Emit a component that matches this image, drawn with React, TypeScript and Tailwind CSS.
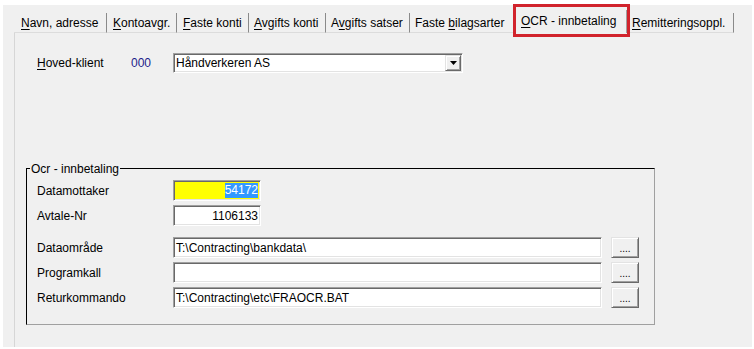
import React from 'react';

const font = "font-['Liberation_Sans',Arial,sans-serif]";

// sunken 3d edge (text boxes) and raised edge (buttons)
const sunken =
  'border border-[#a0a0a0] border-r-white border-b-white shadow-[inset_1px_1px_0_#696969,inset_-1px_-1px_0_#e3e3e3]';
const raised =
  'border border-[#e3e3e3] border-r-[#696969] border-b-[#696969] shadow-[inset_1px_1px_0_#ffffff,inset_-1px_-1px_0_#a0a0a0] bg-[#f0f0f0]';

const Mnemonic = ({ text, u }: { text: string; u: number }) => (
  <span>
    {text.slice(0, u)}
    <span className="underline underline-offset-2">{text.charAt(u)}</span>
    {text.slice(u + 1)}
  </span>
);

const tabs = [
  { text: 'Navn, adresse', u: 0, cls: 'w-[93px] pl-[7px] border-r' },
  { text: 'Kontoavgr.', u: 0, cls: 'w-[70px] pl-[6px] border-r' },
  { text: 'Faste konti', u: 0, cls: 'w-[72px] pl-[6px] border-r' },
  { text: 'Avgifts konti', u: 0, cls: 'w-[77px] pl-[5px] border-r' },
  { text: 'Avgifts satser', u: 1, cls: 'w-[84px] pl-[5px] border-r' },
  { text: 'Faste bilagsarter', u: 6, cls: 'w-[103px] pl-[5px]' },
];

const EllipsisButton = () => (
  <div className={`${raised} ml-[9px] w-[28px] h-[21px] flex items-end justify-center pb-[3px] text-[10px] leading-[10px]`}>
    ....
  </div>
);

const PathRow = ({ label, value, first }: { label: string; value: string; first?: boolean }) => (
  <div className={`flex items-center pl-[10px] ${first ? 'mt-[11px]' : 'mt-[4px]'}`}>
    <div className="w-[136px]">{label}</div>
    <div className={`${sunken} bg-white w-[429px] h-[21px] pl-[2px] flex items-center`}>{value}</div>
    <EllipsisButton />
  </div>
);

export default function App() {
  return (
    <div className={`${font} w-[754px] h-[349px] bg-white pt-[5px] pl-[3px] pr-[2px] pb-[2px] text-[12px] text-black`}>
      <div className="h-full bg-[#f0f0f0] flex flex-col">
        {/* Tabs */}
        <div className="h-[28px] flex items-end ml-[11px]">
          {tabs.map((t) => (
            <div
              key={t.text}
              className={`${t.cls} h-[20px] pt-[3px] leading-[14px] border-b border-[#8a8a8a] border-b-[#dcdcdc] whitespace-nowrap`}
            >
              <Mnemonic text={t.text} u={t.u} />
            </div>
          ))}
          <div className="relative w-[117px] h-[26px] pl-[8px] pt-[7px] leading-[14px] whitespace-nowrap">
            <div className="absolute top-[3px] bottom-0 right-[3px] border-r border-[#a0a0a0]" />
            <Mnemonic text="OCR - innbetaling" u={0} />
            <div className="absolute left-0 right-0 top-[-3px] bottom-[-4px] border-[3px] border-[#d1232c]" />
          </div>
          <div className="w-[104px] h-[20px] pl-[2px] pt-[3px] leading-[14px] border-b border-r border-[#8a8a8a] border-b-[#dcdcdc] whitespace-nowrap">
            <Mnemonic text="Remitteringsoppl." u={0} />
          </div>
        </div>

        {/* Panel */}
        <div className="flex-1 ml-[11px] border-l border-[#d6d6d6] flex flex-col">
          <div className="mt-[20px] pl-[22px] flex items-center">
            <div className="w-[94px]">
              <Mnemonic text="Hoved-klient" u={0} />
            </div>
            <div className="w-[42px] text-[#1c1c8a]">000</div>
            <div className={`${sunken} bg-white w-[290px] h-[20px] pl-[2px] pr-[1px] flex items-center justify-between`}>
              <span>Håndverkeren AS</span>
              <div className={`${raised} w-[16px] h-[16px] flex items-center justify-center`}>
                <svg width="7" height="4" viewBox="0 0 7 4">
                  <path d="M0 0h7L3.5 4z" fill="#000" />
                </svg>
              </div>
            </div>
          </div>

          {/* Ocr group */}
          <div className="ml-[11px] mt-[95px] w-[629px] border border-black border-r-[#a0a0a0] border-b-[#a0a0a0] flex flex-col pb-[16px]">
            <span className="self-start -mt-[7px] ml-[3px] px-[1px] bg-[#f0f0f0] leading-[14px]">Ocr - innbetaling</span>

            <div className="flex items-center pl-[10px] mt-[4px]">
              <div className="w-[136px]">Datamottaker</div>
              <div className={`${sunken} bg-[#ffff00] w-[88px] h-[21px] pr-[2px] flex items-center justify-end`}>
                <span className="bg-[#3399ff] text-white leading-[15px]">54172</span>
              </div>
            </div>
            <div className="flex items-center pl-[10px] mt-[4px]">
              <div className="w-[136px]">Avtale-Nr</div>
              <div className={`${sunken} bg-white w-[88px] h-[21px] pr-[2px] flex items-center justify-end`}>1106133</div>
            </div>

            <PathRow label="Dataområde" value="T:\Contracting\bankdata\" first />
            <PathRow label="Programkall" value="" />
            <PathRow label="Returkommando" value="T:\Contracting\etc\FRAOCR.BAT" />
          </div>
        </div>
      </div>
    </div>
  );
}
